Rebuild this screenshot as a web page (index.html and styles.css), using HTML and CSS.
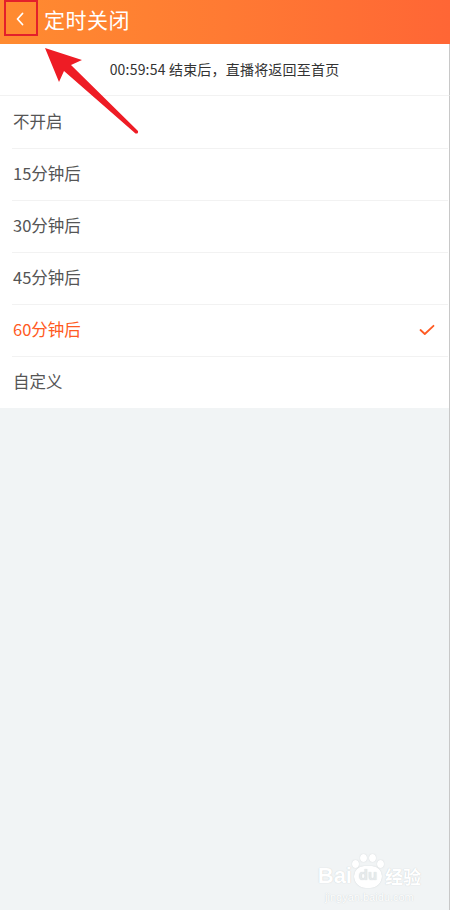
FILE: index.html
```html
<!DOCTYPE html>
<html lang="zh-CN">
<head>
<meta charset="utf-8">
<title>定时关闭</title>
<link rel="stylesheet" href="styles.css">
</head>
<body>
<div class="app">
  <header class="topbar">
    <span class="back">
      <svg width="10" height="14" viewBox="0 0 10 14"><path d="M7.5 1.5 L2.5 7 L7.5 12.5" fill="none" stroke="#fff" stroke-width="1.8" stroke-linecap="round" stroke-linejoin="round"/></svg>
    </span>
    <h1 class="title">定时关闭</h1>
  </header>
  <div class="info">00:59:54 结束后，直播将返回至首页</div>
  <ul class="options">
    <li class="opt"><span>不开启</span></li>
    <li class="opt"><span>15分钟后</span></li>
    <li class="opt"><span>30分钟后</span></li>
    <li class="opt"><span>45分钟后</span></li>
    <li class="opt selected"><span>60分钟后</span>
      <svg class="check" width="16" height="12" viewBox="0 0 16 12"><path d="M1.5 6 L5.8 10 L14.5 1.8" fill="none" stroke="#ff5a22" stroke-width="1.8" stroke-linecap="round" stroke-linejoin="round"/></svg>
    </li>
    <li class="opt"><span>自定义</span></li>
  </ul>
  <div class="rest">
    <div class="watermark">
      <div class="wm-logo"><span class="wm-bai">Bai</span><span class="wm-du"><span class="paw"><i></i><i></i><i></i><i></i></span>du</span><span class="wm-jy">经验</span></div>
      <div class="wm-url">jingyan.baidu.com</div>
    </div>
  </div>
  <div class="foot"></div>

  <div class="annot-box"></div>
  <svg class="annot-arrow" width="150" height="140" viewBox="0 0 150 140">
    <path d="M45 48 L82 60 L71 65 L138 131 Q138.5 134 135.5 133.5 L64 71 L59 82 Z" fill="#ee1c25"/>
  </svg>
</div>
</body>
</html>
```

FILE: styles.css
```css
* { box-sizing: border-box; }
html, body { margin: 0; padding: 0; }
body {
  width: 450px;
  height: 920px;
  background: #fff;
  font-family: "Noto Sans CJK SC", "Noto Sans", sans-serif;
  overflow: hidden;
}
.app {
  position: relative;
  width: 450px;
  height: 920px;
  display: flex;
  flex-direction: column;
}
.topbar {
  height: 44px;
  flex: none;
  display: flex;
  align-items: center;
  padding: 0 0 6px 0;
  background: linear-gradient(90deg, #ff8b30 0%, #ff7a33 50%, #ff6635 100%);
}
.back {
  width: 44px;
  display: flex;
  justify-content: center;
  padding-right: 4px;
}
.title {
  margin: 0;
  font-size: 21px;
  font-weight: 400;
  color: #fff;
  letter-spacing: 0.5px;
}
.info {
  height: 52px;
  flex: none;
  display: flex;
  align-items: center;
  justify-content: center;
  padding-bottom: 2px;
  font-size: 14px;
  color: #333;
  letter-spacing: 0.2px;
  border-bottom: 1px solid #f2f2f2;
  border-right: 1px solid #c8c8c8;
}
.options {
  list-style: none;
  margin: 0;
  padding: 0 1px 0 0;
  border-right: 1px solid #c8c8c8;
  flex: none;
}
.opt {
  height: 52px;
  margin-left: 12px;
  padding: 0 13px 3px 1px;
  display: flex;
  align-items: center;
  justify-content: space-between;
  font-size: 16.5px;
  color: #555;
  border-top: 1px solid #f2f2f2;
}
.opt:first-child { border-top: none; }
.opt.selected { color: #ff5a22; }
.opt .check { margin-top: 2px; }
.rest {
  flex: 1;
  background: #f1f4f5;
  position: relative;
  border-right: 1px solid #c8c8c8;
}
.foot {
  height: 10px;
  flex: none;
  background: #fff;
}
.watermark {
  position: absolute;
  right: 28px;
  bottom: 6px;
  color: #fff;
  text-align: center;
  text-shadow: 0 0 1px rgba(140,150,155,0.45);
}
.wm-logo {
  display: flex;
  align-items: flex-end;
  font-family: "Liberation Sans", Arial, sans-serif;
  font-weight: 700;
}
.wm-bai { font-size: 22px; line-height: 24px; }
.wm-du {
  position: relative;
  font-size: 15px;
  line-height: 18px;
  width: 28px;
  height: 22px;
  margin: 0 3px 0 2px;
  border-radius: 10px 10px 12px 12px;
  background: #fff;
  color: #e6eaec;
  text-align: center;
  box-shadow: 0 0 1px rgba(150,160,165,0.5);
}
.paw { position: absolute; left: 0; top: -12px; width: 28px; height: 12px; }
.paw i {
  position: absolute;
  width: 7px; height: 8px;
  border-radius: 50%;
  background: #fff;
  box-shadow: 0 0 1px rgba(150,160,165,0.5);
}
.paw i:nth-child(1) { left: -2px; top: 6px; }
.paw i:nth-child(2) { left: 6px; top: 0; }
.paw i:nth-child(3) { left: 15px; top: 0; }
.paw i:nth-child(4) { left: 23px; top: 6px; }
.wm-jy {
  font-family: "Noto Sans CJK SC", sans-serif;
  font-size: 18px;
  line-height: 24px;
  font-weight: 700;
}
.wm-url {
  font-family: "Liberation Sans", Arial, sans-serif;
  font-size: 11px;
  line-height: 14px;
  margin-top: 2px;
}
.annot-box {
  position: absolute;
  left: 4px;
  top: 0;
  width: 34px;
  height: 36px;
  border: 2px solid #e3202b;
}
.annot-arrow {
  position: absolute;
  left: 0;
  top: 0;
}
```
